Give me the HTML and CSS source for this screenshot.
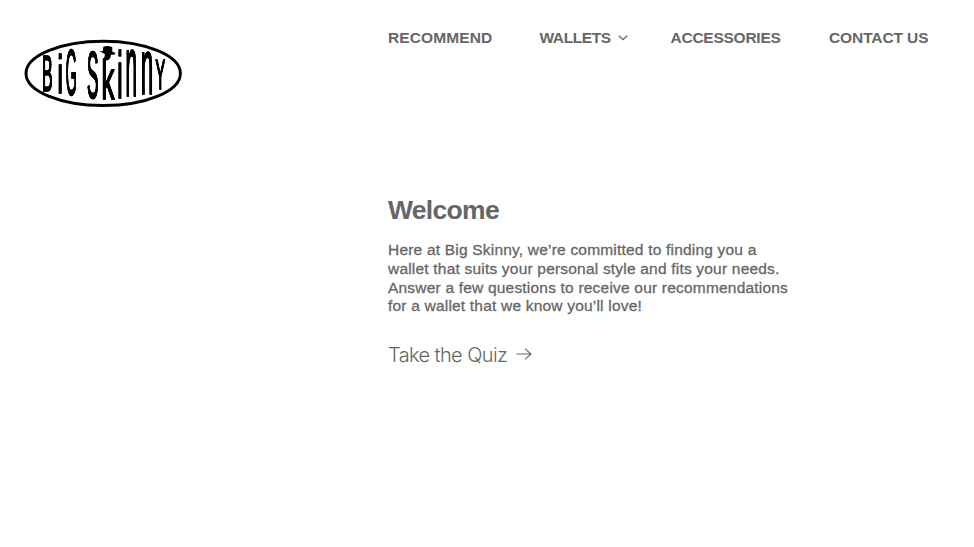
FILE: index.html
```html
<!DOCTYPE html>
<html lang="en">
<head>
<meta charset="utf-8">
<title>Big Skinny</title>
<link rel="stylesheet" href="styles.css">
</head>
<body>
<div class="page">
  <a class="logo">
    <svg viewBox="24 39 159 69" width="159" height="69" role="img" aria-label="Big Skinny">
      <ellipse class="logo-ring" cx="103.2" cy="73.4" rx="77.2" ry="32.1"/>
      <g class="logo-letters">
        <text transform="matrix(.159 0 0 .5 42.1 90.5)">B</text>
        <text transform="matrix(.24 0 0 .534 57.5 93)">i</text>
        <text transform="matrix(.142 0 0 .64 65.65 95.2)">G</text>
        <text transform="matrix(.172 0 0 .67 87 97.5)">S</text>
        <text transform="matrix(.256 0 0 .56 101.5 98.5)">k</text>
        <text transform="matrix(.24 0 0 .66 117.2 97.5)">i</text>
        <text transform="matrix(.209 0 0 .85 125.600 96)">n</text>
        <text transform="matrix(.225 0 0 .77 140.800 94.2)">n</text>
        <text transform="matrix(.144 0 0 .43 155.600 88.5)">Y</text>
      </g>
      <path class="logo-hat" d="M99.300 50.900L102.800 51.200L103.300 46.800Q107.500 45 112.300 47.200L112.300 51.800L115.400 52.700L114.500 54.700L111 54.700L110.500 57.500L108.500 60L103.500 61L105 54.300Z"/>
    </svg>
  </a>
  <div class="content">
    <nav class="nav">
      <a class="recommend">RECOMMEND</a>
      <a class="wallets"><span>WALLETS</span><svg class="chevron" viewBox="0 0 10 6" width="10" height="6"><path d="M.8 .8L5 4.700L9.200 .8"/></svg></a>
      <a class="accessories">ACCESSORIES</a>
      <a class="contact">CONTACT US</a>
    </nav>
    <main class="welcome">
      <h1>Welcome</h1>
      <p>Here at Big Skinny, we’re committed to finding you a<br>wallet that suits your personal style and fits your needs.<br>Answer a few questions to receive our recommendations<br>for a wallet that we know you’ll love!</p>
      <a class="quiz"><span>Take the Quiz</span><svg class="arrow" viewBox="0 0 16 12" width="16" height="12"><path d="M.5 6H15M9 .7L15 6L9 11.300"/></svg></a>
    </main>
  </div>
</div>
</body>
</html>
```
FILE: styles.css
```css
body {
  margin: 0;
  background: #fff;
  color: #666;
  font-family: "Liberation Sans", Arial, sans-serif;
}
.page {
  display: grid;
  grid-template-columns: 388px 1fr;
  height: 547px;
}
.logo {
  padding: 39px 0 0 24px;
}
.logo svg {
  display: block;
  overflow: visible;
}
.logo-ring {
  fill: none;
  stroke: #000;
  stroke-width: 2.9;
}
.logo-letters {
  font-size: 100px;
  filter: drop-shadow(.7px 0 0 #000);
}
.logo-letters text {
  stroke: #000;
  stroke-width: 1.2;
  vector-effect: non-scaling-stroke;
}
.nav {
  display: grid;
  grid-template-columns: 151.500px 131px 158.500px 1fr;
  padding-top: 28px;
  font-size: 15.5px;
  font-weight: 700;
  line-height: 20px;
  white-space: nowrap;
}
.recommend {
  letter-spacing: .1px;
}
.wallets {
  letter-spacing: -.4px;
}
.accessories {
  letter-spacing: -.25px;
}
.contact {
  letter-spacing: -.1px;
}
.chevron {
  margin-left: 7px;
  vertical-align: 2px;
}
.chevron path,
.arrow path {
  fill: none;
  stroke: #666;
  stroke-width: 1.3;
}
.welcome {
  padding-top: 146px;
}
h1 {
  margin: 0;
  font-size: 26.5px;
  letter-spacing: -.7px;
  line-height: 32px;
}
p {
  margin: 15px 0 0;
  font-size: 15.5px;
  letter-spacing: .2px;
  line-height: 18.8px;
  white-space: nowrap;
  -webkit-text-stroke: .3px #666;
}
.quiz {
  display: flex;
  align-items: center;
  margin-top: 27px;
  font-family: Inter, sans-serif;
  font-weight: 300;
  font-size: 20px;
  letter-spacing: -.6px;
  line-height: 24px;
}
.arrow {
  margin: -2px 0 0 9px;
}
.arrow path {
  stroke-width: 1.1;
}
```
